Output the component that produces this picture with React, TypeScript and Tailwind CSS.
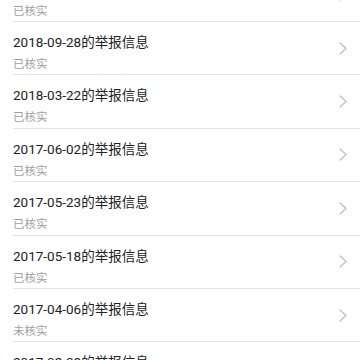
import React from 'react';

interface Report {
  date: string;
  checked: boolean;
}

const reports: Report[] = [
  { date: '2018-10-15', checked: true },
  { date: '2018-09-28', checked: true },
  { date: '2018-03-22', checked: true },
  { date: '2017-06-02', checked: true },
  { date: '2017-05-23', checked: true },
  { date: '2017-05-18', checked: true },
  { date: '2017-04-06', checked: false },
  { date: '2017-03-08', checked: true },
];

const Chevron = () => (
  <svg width="8" height="13" viewBox="0 0 8 13" fill="none">
    <polyline points="1,1 7,6.5 1,12" stroke="#bdbdbd" strokeWidth="1.2" strokeLinejoin="round" strokeLinecap="round" />
  </svg>
);

export default function App() {
  return (
    <div className="w-[360px] h-[360px] overflow-hidden bg-white font-['Roboto','Noto_Sans_CJK_SC',sans-serif]">
      {/* list scrolled a bit: first row's title is off-screen */}
      <div className="-mt-[31.4px]">
        {reports.map((r) => (
          <div key={r.date} className="ml-[13px] h-[53.4px] border-b border-[#e3e3e3] flex justify-between pr-[13px]">
            <div className="flex flex-col pt-[10px]">
              <span className="text-[13.5px] leading-[20px] text-[#212121]">{r.date}的举报信息</span>
              <span className="mt-[5px] text-[11.5px] leading-[14px] text-[#a0a0a0]">{r.checked ? '已核实' : '未核实'}</span>
            </div>
            <div className="self-center">
              <Chevron />
            </div>
          </div>
        ))}
      </div>
    </div>
  );
}
